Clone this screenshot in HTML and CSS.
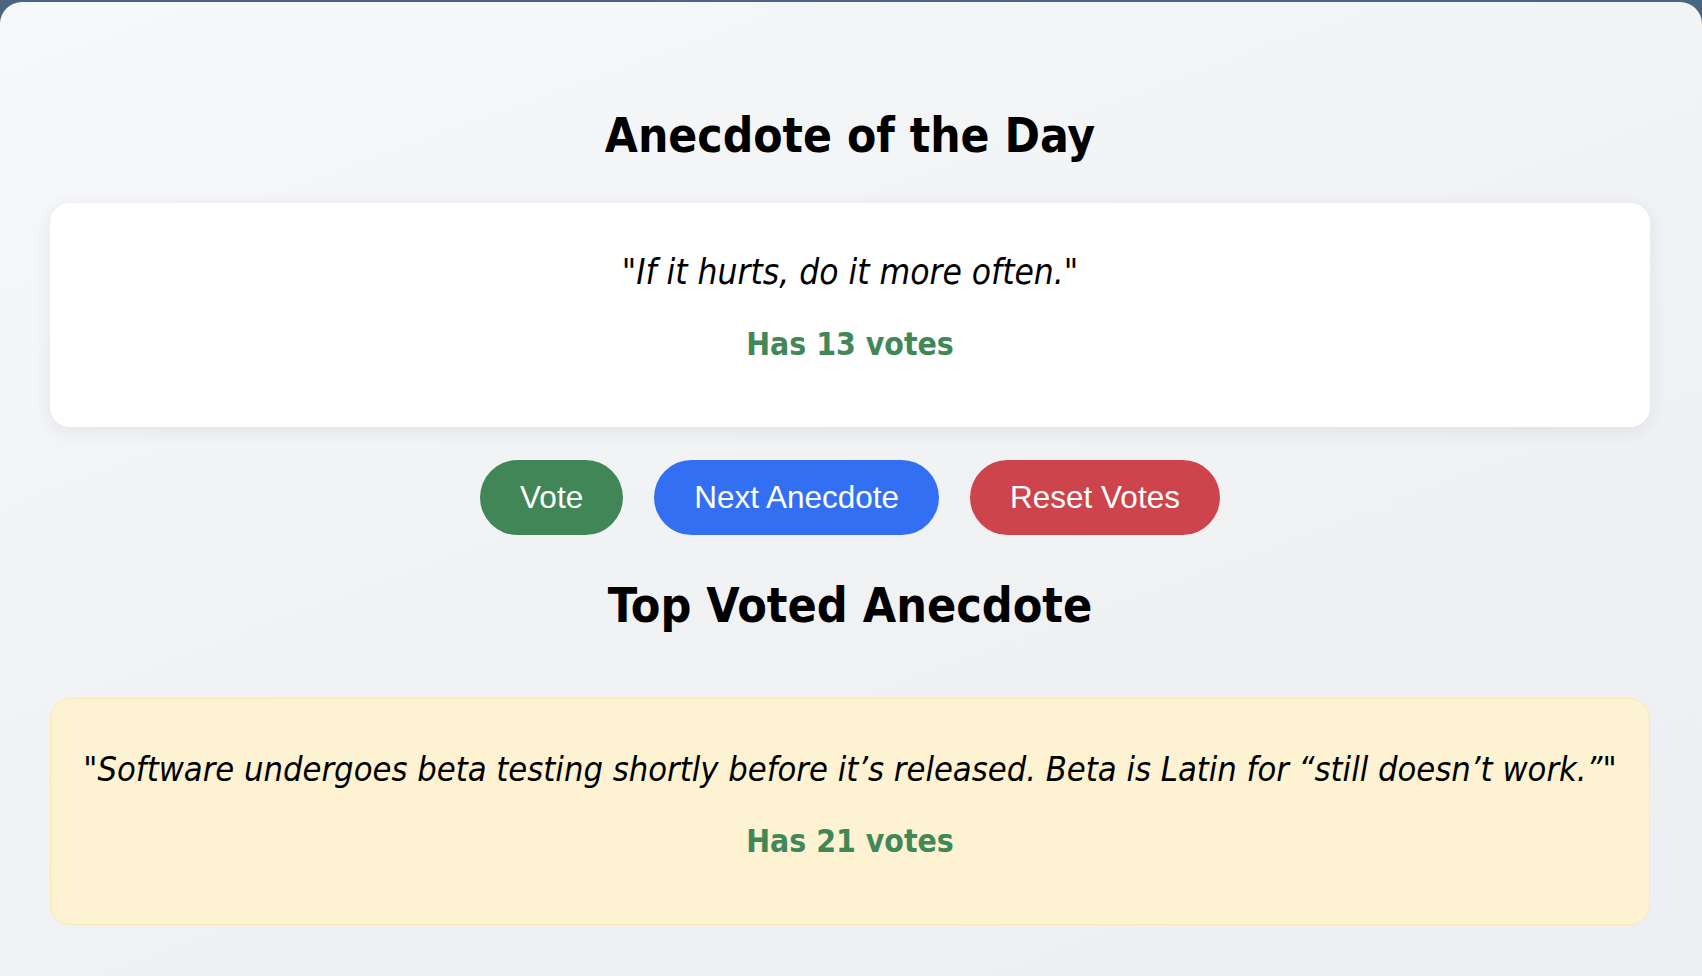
FILE: index.html
```html
<!DOCTYPE html>
<html lang="en">
<head>
<meta charset="utf-8">
<title>Anecdotes</title>
<link rel="stylesheet" href="styles.css">
</head>
<body>
<div class="app">
  <h1 class="title">Anecdote of the Day</h1>
  <section class="card card-day">
    <p class="quote">"If it hurts, do it more often."</p>
    <p class="votes">Has 13 votes</p>
  </section>
  <div class="actions">
    <button class="btn btn-vote">Vote</button>
    <button class="btn btn-next">Next Anecdote</button>
    <button class="btn btn-reset">Reset Votes</button>
  </div>
  <h2 class="title title-top">Top Voted Anecdote</h2>
  <section class="card card-top">
    <p class="quote">"Software undergoes beta testing shortly before it’s released. Beta is Latin for “still doesn’t work.”"</p>
    <p class="votes">Has 21 votes</p>
  </section>
</div>
</body>
</html>
```

FILE: styles.css
```css
html, body {
  margin: 0;
  padding: 0;
  height: 100%;
}
body {
  background: #4a6581;
  font-family: "DejaVu Sans Condensed", "DejaVu Sans", sans-serif;
  overflow: hidden;
}
.app {
  margin-top: 2px;
  min-height: 974px;
  box-sizing: border-box;
  border-radius: 22px 22px 0 0;
  background: linear-gradient(160deg, #f7f8fa 0%, #f1f2f4 50%, #eceef1 100%);
  padding: 105px 52px 0 50px;
  display: flex;
  flex-direction: column;
  align-items: stretch;
}
.title {
  margin: 0;
  text-align: center;
  font-weight: bold;
  font-size: 47.5px;
  line-height: 58px;
  color: #000;
}
.title-top {
  margin-top: 41px;
  font-size: 48px;
}
.card {
  border-radius: 20px;
  text-align: center;
}
.card-day {
  margin-top: 38px;
  background: #fff;
  box-shadow: 0 4px 18px rgba(30, 40, 60, 0.08);
  height: 224px;
  box-sizing: border-box;
  padding: 51px 20px 0;
}
.quote {
  margin: 0;
  font-style: italic;
  font-size: 35px;
  line-height: 36px;
  color: #000;
}
.card-top .quote {
  font-size: 34.2px;
  white-space: nowrap;
}
.votes {
  margin: 37px 0 0;
  font-weight: bold;
  font-size: 31.7px;
  line-height: 34px;
  color: #418758;
}
.actions {
  margin-top: 33px;
  display: flex;
  justify-content: center;
  gap: 31px;
}
.btn {
  border: none;
  border-radius: 38px;
  height: 75px;
  padding: 0 40px;
  font-family: "Liberation Sans", Arial, sans-serif;
  font-size: 31.5px;
  color: #fff;
}
.btn-vote { background: #408656; }
.btn-next { background: #336ff3; }
.btn-reset { background: #cd444c; }
.card-top {
  margin-top: 64px;
  background: #fdf2d1;
  border: 1px solid #fbe9b3;
  height: 227px;
  box-sizing: border-box;
  padding: 52px 10px 0;
}
```
